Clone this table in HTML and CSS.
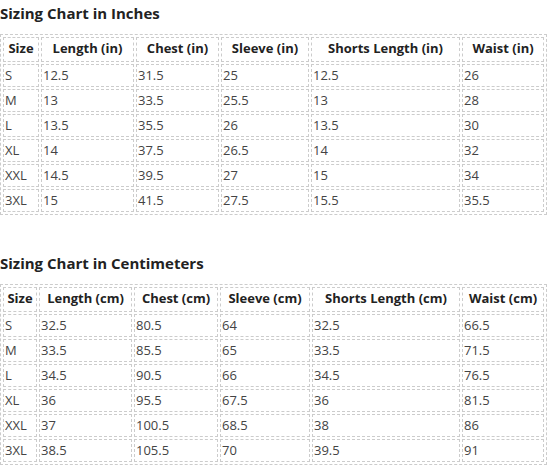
FILE: index.html
```html
<!DOCTYPE html>
<html lang="en">
<head>
<meta charset="utf-8">
<title>Sizing Chart</title>
<link rel="stylesheet" href="styles.css">
</head>
<body>
<section class="chart chart-in">
  <h2 class="chart-title">Sizing Chart in Inches</h2>
  <table class="size-table">
    <colgroup>
      <col class="c-size"><col class="c-length"><col class="c-chest"><col class="c-sleeve"><col class="c-shorts"><col class="c-waist">
    </colgroup>
    <thead>
      <tr><th>Size</th><th>Length (in)</th><th>Chest (in)</th><th>Sleeve (in)</th><th>Shorts Length (in)</th><th>Waist (in)</th></tr>
    </thead>
    <tbody>
      <tr><td>S</td><td>12.5</td><td>31.5</td><td>25</td><td>12.5</td><td>26</td></tr>
      <tr><td>M</td><td>13</td><td>33.5</td><td>25.5</td><td>13</td><td>28</td></tr>
      <tr><td>L</td><td>13.5</td><td>35.5</td><td>26</td><td>13.5</td><td>30</td></tr>
      <tr><td>XL</td><td>14</td><td>37.5</td><td>26.5</td><td>14</td><td>32</td></tr>
      <tr><td>XXL</td><td>14.5</td><td>39.5</td><td>27</td><td>15</td><td>34</td></tr>
      <tr><td>3XL</td><td>15</td><td>41.5</td><td>27.5</td><td>15.5</td><td>35.5</td></tr>
    </tbody>
  </table>
</section>
<section class="chart chart-cm">
  <h2 class="chart-title">Sizing Chart in Centimeters</h2>
  <table class="size-table">
    <colgroup>
      <col class="c-size"><col class="c-length"><col class="c-chest"><col class="c-sleeve"><col class="c-shorts"><col class="c-waist">
    </colgroup>
    <thead>
      <tr><th>Size</th><th>Length (cm)</th><th>Chest (cm)</th><th>Sleeve (cm)</th><th>Shorts Length (cm)</th><th>Waist (cm)</th></tr>
    </thead>
    <tbody>
      <tr><td>S</td><td>32.5</td><td>80.5</td><td>64</td><td>32.5</td><td>66.5</td></tr>
      <tr><td>M</td><td>33.5</td><td>85.5</td><td>65</td><td>33.5</td><td>71.5</td></tr>
      <tr><td>L</td><td>34.5</td><td>90.5</td><td>66</td><td>34.5</td><td>76.5</td></tr>
      <tr><td>XL</td><td>36</td><td>95.5</td><td>67.5</td><td>36</td><td>81.5</td></tr>
      <tr><td>XXL</td><td>37</td><td>100.5</td><td>68.5</td><td>38</td><td>86</td></tr>
      <tr><td>3XL</td><td>38.5</td><td>105.5</td><td>70</td><td>39.5</td><td>91</td></tr>
    </tbody>
  </table>
</section>
</body>
</html>
```
FILE: styles.css
```css
html, body {
  margin: 0;
  padding: 0;
  background: #fff;
}
body {
  font-family: "Open Sans", "Noto Sans", "Liberation Sans", sans-serif;
  color: #333;
}
.chart-title {
  margin: 3px 0 11px 0;
  font-size: 15px;
  line-height: 20px;
  font-weight: 700;
  color: #222;
}
.chart-cm {
  margin-top: 38px;
}
.size-table {
  width: 547px;
  table-layout: fixed;
  border-collapse: separate;
  border-spacing: 2px;
  border: 1px dashed #ccc;
  font-size: 13px;
}
.size-table th,
.size-table td {
  box-sizing: border-box;
  border: 1px dashed #ccc;
  line-height: 19px;
  white-space: nowrap;
}
.size-table th {
  padding: 1px 0 3px;
  font-weight: 700;
  color: #222;
  text-align: center;
}
.size-table td {
  padding: 1px 1px;
  text-align: left;
  color: #444;
}
.chart-in .c-size { width: 36px; }
.chart-in .c-length { width: 93px; }
.chart-in .c-chest { width: 83px; }
.chart-in .c-sleeve { width: 88px; }
.chart-in .c-shorts { width: 149px; }
.chart-in .c-waist { width: 82px; }
.chart-cm .c-size { width: 34px; }
.chart-cm .c-length { width: 93px; }
.chart-cm .c-chest { width: 84px; }
.chart-cm .c-sleeve { width: 90px; }
.chart-cm .c-shorts { width: 148px; }
.chart-cm .c-waist { width: 82px; }
```
